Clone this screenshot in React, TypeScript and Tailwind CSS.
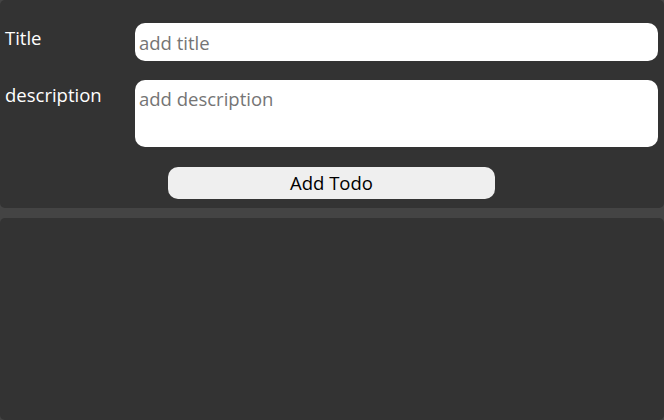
import React from "react";

export default function App() {
  return (
    <div
      className="w-[664px] h-[420px] bg-[#444444] flex flex-col gap-[10px] overflow-hidden"
      style={{ fontFamily: '"Open Sans", "Noto Sans", sans-serif' }}
    >
      <div className="bg-[#333333] rounded-[5px] h-[208px] shrink-0 pt-[23px] pr-[6px] flex flex-col">
        <div className="flex items-start">
          <label className="w-[135px] shrink-0 pl-[5px] pt-[3px] text-[18.5px] text-white leading-[24.5px]">
            Title
          </label>
          <input
            type="text"
            placeholder="add title"
            className="flex-1 h-[38px] bg-white rounded-[10px] pl-[4px] pr-[3px] text-[18.5px] text-black placeholder:text-[#757575] outline-none border-0"
          />
        </div>
        <div className="flex items-start mt-[19px]">
          <label className="w-[135px] shrink-0 pl-[5px] pt-[3px] text-[18.5px] text-white leading-[24.5px]">
            description
          </label>
          <textarea
            placeholder="add description"
            className="flex-1 h-[67px] bg-white rounded-[10px] pl-[4px] pr-[3px] pt-[7px] text-[18.5px] leading-[24.5px] text-black placeholder:text-[#757575] outline-none border-0 resize-none"
          />
        </div>
        <div className="flex justify-center mt-[20px] pl-[5px]">
          <button className="w-[327px] h-[32px] bg-[#efefef] rounded-[10px] text-[18.5px] text-black leading-[24.5px]">
            Add Todo
          </button>
        </div>
      </div>
      <div className="bg-[#333333] rounded-[5px] flex-1" />
    </div>
  );
}
